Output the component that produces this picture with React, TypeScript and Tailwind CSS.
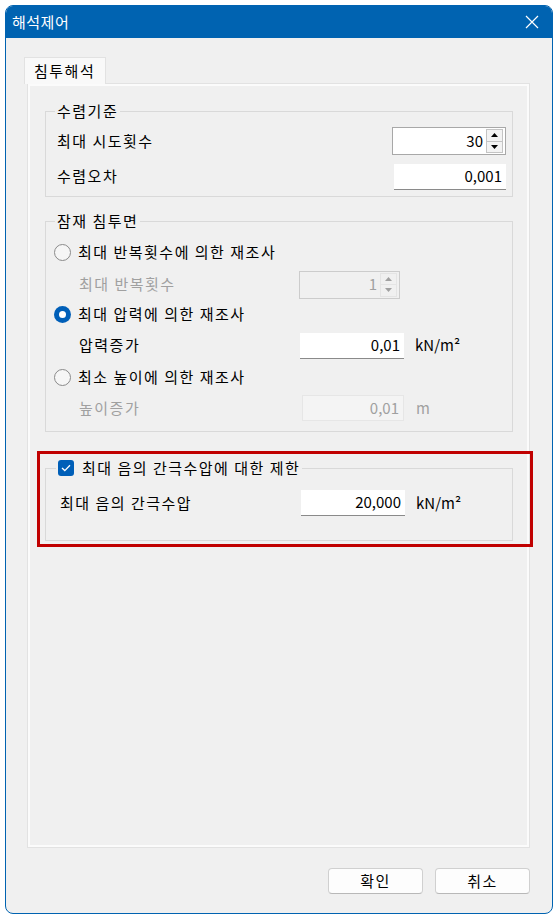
import React from 'react';

const font = {fontFamily: '"Noto Sans CJK KR", "Noto Sans", sans-serif'};

function Spin({value, disabled}: {value: string; disabled?: boolean}) {
  return (
    <div
      className={`flex items-stretch h-[28px] border ${
        disabled ? 'bg-[#f0f0f0] border-[#cccccc] text-[#a0a0a0]' : 'bg-white border-[#a8a8a8] text-black'
      }`}
    >
      <div className="flex-1 flex items-center justify-end pr-[3px] text-[15px]">{value}</div>
      <div className="w-[17px] flex flex-col my-[1px] mr-[2px]">
        <div className={`flex-1 flex items-center justify-center border ${disabled ? 'border-[#e4e4e4] bg-[#f0f0f0]' : 'border-[#c4c4c4] bg-[#f3f3f3]'}`}>
          <svg width="7" height="4" viewBox="0 0 7 4">
            <path d="M0 4 L3.5 0 L7 4 Z" fill={disabled ? '#a0a0a0' : '#000'} />
          </svg>
        </div>
        <div className={`flex-1 flex items-center justify-center border border-t-0 ${disabled ? 'border-[#e4e4e4] bg-[#f0f0f0]' : 'border-[#c4c4c4] bg-[#f3f3f3]'}`}>
          <svg width="7" height="4" viewBox="0 0 7 4">
            <path d="M0 0 L3.5 4 L7 0 Z" fill={disabled ? '#a0a0a0' : '#000'} />
          </svg>
        </div>
      </div>
    </div>
  );
}

function Field({value, disabled, w = 'w-[104px]'}: {value: string; disabled?: boolean; w?: string}) {
  return (
    <div
      className={`${w} h-[26px] flex items-center justify-end pr-[4px] text-[15px] ${
        disabled
          ? 'bg-[#f4f4f4] border border-[#e6e6e6] text-[#a0a0a0]'
          : 'bg-white border-b border-[#8a8a8a] text-black'
      }`}
    >
      {value}
    </div>
  );
}

function Radio({checked, label}: {checked?: boolean; label: string}) {
  return (
    <div className="flex items-center h-[22px]">
      {checked ? (
        <span className="w-[17px] h-[17px] rounded-full bg-[#005fb8] flex items-center justify-center">
          <span className="w-[7px] h-[7px] rounded-full bg-white" />
        </span>
      ) : (
        <span className="w-[17px] h-[17px] rounded-full border border-[#8a8a8a] bg-[#f6f6f6]" />
      )}
      <span className="ml-[7px] tracking-[1.5px]">{label}</span>
    </div>
  );
}

export default function App() {
  return (
    <div className="w-[559px] h-[921px] bg-white pt-[5px] pl-[5px] text-[15px] text-black" style={font}>
      <div className="w-[548px] h-[909px] border border-[#0063b1] rounded-[8px] bg-[#f0f0f0] flex flex-col overflow-hidden">
        {/* title bar */}
        <div className="h-[32px] bg-[#0063b1] flex items-center justify-between pl-[6px] pr-[13px] text-white text-[15px]">
          <span className="tracking-[0.5px]">해석제어</span>
          <svg width="14" height="14" viewBox="0 0 14 14">
            <path d="M1 1 L13 13 M13 1 L1 13" stroke="#fff" strokeWidth="1.2" />
          </svg>
        </div>

        <div className="flex flex-col pl-[21px] pt-[19px]">
          {/* tab */}
          <div className="relative z-10 -ml-[3px] -mb-px w-[82px] h-[27px] bg-[#f9f9f9] border border-b-0 border-[#e2e2e2] flex items-center pl-[9px] tracking-[1.5px]">
            침투해석
          </div>

          {/* panel */}
          <div className="relative w-[503px] h-[765px] border border-[#e2e2e2] shadow-[inset_0_0_0_2px_#fbfbfb] pt-[17px] pl-[17px] pr-[16px]">
            {/* 수렴기준 */}
            <fieldset className="border border-[#d9d9d9] pl-[11px] pr-[6px] pt-[6px] pb-[6px]">
              <legend className="-ml-[2px] px-[2px] h-[20px] leading-[20px] tracking-[1.5px]">수렴기준</legend>
              <div className="flex items-center justify-between h-[28px]">
                <span className="tracking-[1.5px]">최대 시도횟수</span>
                <div className="w-[114px]">
                  <Spin value="30" />
                </div>
              </div>
              <div className="flex items-center justify-between h-[27px] mt-[8px]">
                <span className="tracking-[1.5px]">수렴오차</span>
                <Field value="0,001" w="w-[112px]" />
              </div>
            </fieldset>

            {/* 잠재 침투면 */}
            <fieldset className="mt-[14px] border border-[#d9d9d9] pl-[8px] pt-[10px] pb-[11px]">
              <legend className="ml-[1px] px-[2px] h-[20px] leading-[20px] tracking-[1.5px]">잠재 침투면</legend>
              <Radio label="최대 반복횟수에 의한 재조사" />
              <div className="flex items-center h-[27px] mt-[8px] text-[#a0a0a0]">
                <span className="w-[245px] pl-[25px] tracking-[1.5px]">최대 반복횟수</span>
                <div className="w-[101px]">
                  <Spin value="1" disabled />
                </div>
              </div>
              <div className="mt-[5px]">
                <Radio checked label="최대 압력에 의한 재조사" />
              </div>
              <div className="flex items-center h-[25px] mt-[8px]">
                <span className="w-[246px] pl-[25px] tracking-[1.5px]">압력증가</span>
                <Field value="0,01" />
                <span className="ml-[11px]">kN/m²</span>
              </div>
              <div className="mt-[8px]">
                <Radio label="최소 높이에 의한 재조사" />
              </div>
              <div className="flex items-center h-[24px] mt-[8px] text-[#a0a0a0]">
                <span className="w-[248px] pl-[25px] tracking-[1.5px]">높이증가</span>
                <Field value="0,01" disabled w="w-[102px]" />
                <span className="ml-[12px]">m</span>
              </div>
            </fieldset>

            {/* 최대 음의 간극수압 */}
            <fieldset className="mt-[26px] border border-[#d9d9d9] pl-[14px] pt-[12px] pb-[24px]">
              <legend className="-ml-[4px] px-[2px] h-[20px] flex items-center">
                <span className="w-[16px] h-[16px] rounded-[3px] bg-[#005fb8] flex items-center justify-center">
                  <svg width="10" height="8" viewBox="0 0 10 8">
                    <path d="M1 4 L3.8 6.6 L9 1.2" stroke="#fff" strokeWidth="1.3" fill="none" />
                  </svg>
                </span>
                <span className="ml-[8px] tracking-[1.5px]">최대 음의 간극수압에 대한 제한</span>
              </legend>
              <div className="flex items-center h-[26px]">
                <span className="w-[241px] tracking-[1.5px]">최대 음의 간극수압</span>
                <Field value="20,000" />
                <span className="ml-[11px]">kN/m²</span>
              </div>
            </fieldset>

            {/* annotation */}
            <div className="absolute left-[9px] top-[367px] w-[496px] h-[96px] border-[3px] border-[#c00000] pointer-events-none" />
          </div>

          {/* buttons */}
          <div className="flex justify-end gap-[12px] w-[503px] mt-[20px]">
            <button className="w-[95px] h-[26px] rounded-[4px] bg-[#fdfdfd] border border-[#d0d0d0] border-b-[#b8b8b8] tracking-[1.5px]">
              확인
            </button>
            <button className="w-[95px] h-[26px] rounded-[4px] bg-[#fdfdfd] border border-[#d0d0d0] border-b-[#b8b8b8] tracking-[1.5px]">
              취소
            </button>
          </div>
        </div>
      </div>
    </div>
  );
}
